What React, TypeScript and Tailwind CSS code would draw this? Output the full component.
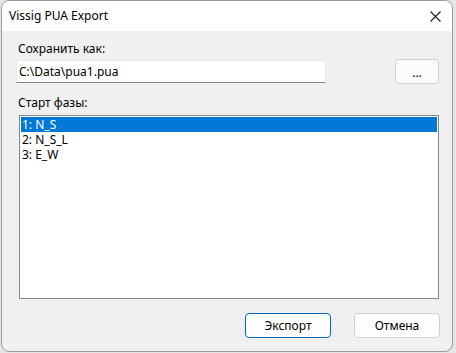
export default function App() {
  const phases = ['1: N_S', '2: N_S_L', '3: E_W'];

  return (
    <div className="w-[456px] h-[353px] bg-[#e6e6e6] font-['Noto_Sans',sans-serif] text-[12px] text-black">
      <div className="ml-px w-[452px] h-[352px] rounded-lg border border-[#9a9a9a] bg-[#f0f0f0] overflow-hidden flex flex-col">
        {/* Title bar */}
        <div className="h-[30px] bg-white flex items-center justify-between pl-[7px] pr-[5px] shrink-0">
          <span className="leading-[16px]">Vissig PUA Export</span>
          <div className="w-[22px] h-[22px] flex items-center justify-center mr-[1px]">
            <svg width="11" height="11" viewBox="0 0 11 11">
              <path d="M0.5 0.5 L10.5 10.5 M10.5 0.5 L0.5 10.5" stroke="#1a1a1a" strokeWidth="1.1" />
            </svg>
          </div>
        </div>

        {/* Body */}
        <div className="flex-1 flex flex-col pt-[10px]">
          <div className="ml-[16px] leading-[16px] h-[16px]">Сохранить как:</div>

          <div className="mt-[2px] flex items-center h-[25px]">
            <div className="ml-[14px] w-[310px] h-[23px] bg-white border border-[#ebebeb] border-b-[#858585] flex items-center pl-[2px]">
              C:\Data\pua1.pua
            </div>
            <button className="ml-[69px] w-[44px] h-[25px] rounded-[4px] border border-[#d0d0d0] bg-[#fbfbfb] leading-none pt-[2px]">
              ...
            </button>
          </div>

          <div className="mt-[11px] ml-[16px] leading-[16px] h-[16px]">Старт фазы:</div>

          <div className="mt-[4px] ml-[17px] w-[420px] h-[184px] border border-[#828790] bg-white p-px">
            {phases.map((p, i) => (
              <div
                key={p}
                className={
                  i === 0
                    ? 'h-[15px] leading-[15px] pl-px bg-[#0078d7] text-white'
                    : 'h-[15px] leading-[15px] pl-px'
                }
              >
                {p}
              </div>
            ))}
          </div>

          <div className="mt-[14px] flex">
            <button className="ml-[243px] w-[86px] h-[25px] rounded-[4px] border border-[#0067c0] bg-[#fdfdfd]">
              Экспорт
            </button>
            <button className="ml-[23px] w-[86px] h-[25px] rounded-[4px] border border-[#d0d0d0] bg-[#fdfdfd]">
              Отмена
            </button>
          </div>
        </div>
      </div>
    </div>
  );
}
